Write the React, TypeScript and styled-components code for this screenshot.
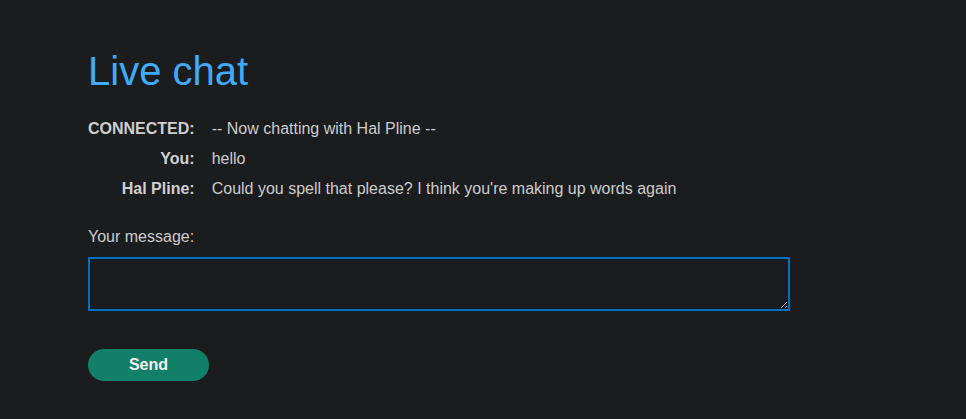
import { Fragment } from 'react';
import styled, { createGlobalStyle } from 'styled-components';

const GlobalStyle = createGlobalStyle`
  html, body {
    margin: 0;
    padding: 0;
    background: #1b1c1e;
  }
  body {
    font-family: "Liberation Sans", Arial, sans-serif;
    color: #cccccc;
  }
`;

const Page = styled.main`
  min-height: 419px;
  padding: 48px 0 0 88px;
  box-sizing: border-box;
`;

const Title = styled.h1`
  margin: 0;
  font-size: 40px;
  font-weight: 400;
  line-height: 46px;
  color: #3fabfa;
`;

// chat transcript: speaker right-aligned, message left
const ChatLog = styled.div`
  display: grid;
  grid-template-columns: max-content max-content;
  column-gap: 17px;
  margin-top: 20px;
`;

const Who = styled.span`
  padding: 6px 0;
  font-size: 16px;
  font-weight: 700;
  text-align: right;
  color: #cfcfcf;
`;

const Says = styled.span`
  padding: 6px 0;
  font-size: 16px;
  color: #cccccc;
`;

const Form = styled.form`
  display: flex;
  flex-direction: column;
  align-items: flex-start;
  margin-top: 24px;
`;

const FieldLabel = styled.label`
  font-size: 16px;
  color: #cccccc;
`;

const MessageBox = styled.textarea`
  display: block;
  width: 702px;
  height: 54px;
  margin-top: 11px;
  box-sizing: border-box;
  background: #1b1c1e;
  border: 2px solid #0071c5;
  border-radius: 0;
  outline: none;
  color: #cccccc;
  font-family: inherit;
  font-size: 16px;
  resize: both;
`;

const SendButton = styled.button`
  margin-top: 38px;
  width: 121px;
  height: 32px;
  border: none;
  border-radius: 16px;
  background: #128068;
  color: #f2f2f2;
  font-family: inherit;
  font-size: 16px;
  font-weight: 700;
  cursor: pointer;
`;

const messages = [
  { who: 'CONNECTED:', text: '-- Now chatting with Hal Pline --' },
  { who: 'You:', text: 'hello' },
  { who: 'Hal Pline:', text: "Could you spell that please? I think you're making up words again" },
];

export default function App() {
  return (
    <>
      <GlobalStyle />
      <Page>
        <Title>Live chat</Title>
        <ChatLog>
          {messages.map((m) => (
            <Fragment key={m.who}>
              <Who>{m.who}</Who>
              <Says>{m.text}</Says>
            </Fragment>
          ))}
        </ChatLog>
        <Form onSubmit={(e) => e.preventDefault()}>
          <FieldLabel htmlFor="msg">Your message:</FieldLabel>
          <MessageBox id="msg" />
          <SendButton type="submit">Send</SendButton>
        </Form>
      </Page>
    </>
  );
}
